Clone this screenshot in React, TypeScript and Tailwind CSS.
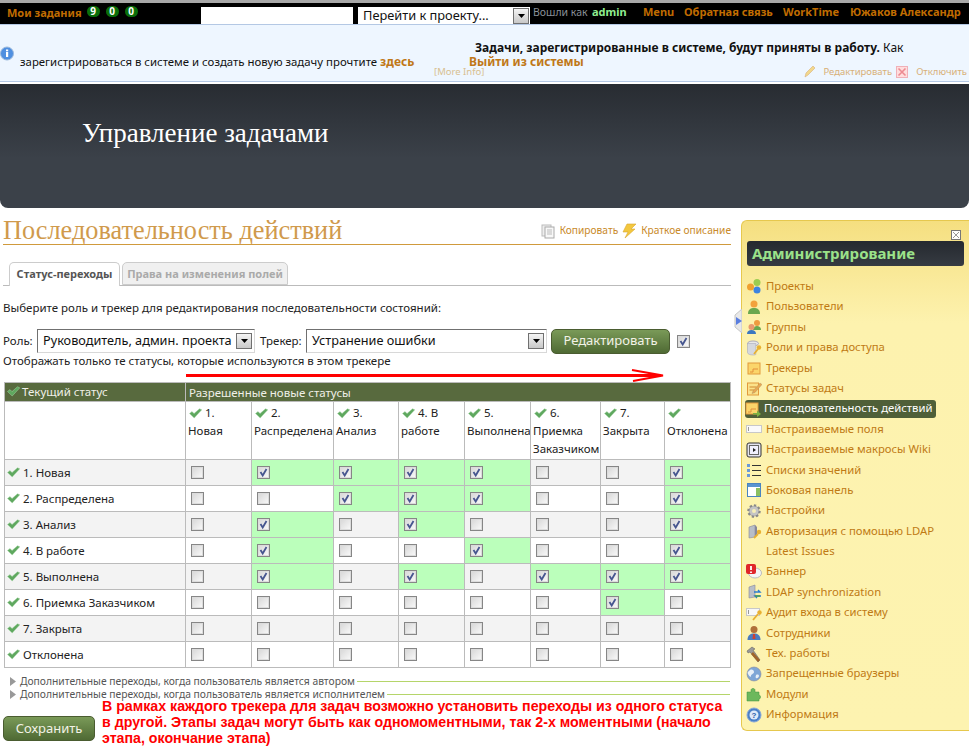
import React from "react";

const F = "font-['Noto_Sans','DejaVu_Sans',sans-serif]";

function Check() {
  return (
    <svg width="13" height="11" viewBox="0 0 13 11" className="inline-block shrink-0">
      <path d="M0.500 5.500 L3 3.600 L5 5.600 L10.500 0.800 L12.800 1.800 L5.200 10 Z" fill="#5fa85f" stroke="#a4d4a4" strokeWidth="0.5" />
    </svg>
  );
}

function Box({ on }: { on?: boolean }) {
  return (
    <span className="relative block w-[13px] h-[13px] border border-[#868686] bg-gradient-to-br from-[#d6d6d6] to-[#fbfbfb] outline outline-1 outline-[#dcdcdc] -outline-offset-2">
      {on && (
        <svg viewBox="0 0 11 11" className="absolute left-0 top-0 w-[11px] h-[11px]">
          <path d="M2.5 5 L4.7 8.5 L8.5 2" fill="none" stroke="#46568f" strokeWidth="1.8" />
        </svg>
      )}
    </span>
  );
}

function Caret() {
  return (
    <span className="flex items-center justify-center w-[16px] h-[16px] border border-[#707070] bg-gradient-to-b from-[#f4f4f4] to-[#c8c8c8]">
      <svg width="7" height="4" viewBox="0 0 7 4"><path d="M0 0H7L3.5 4Z" fill="#000" /></svg>
    </span>
  );
}

function Sel({ w, text }: { w: string; text: string }) {
  return (
    <div className={`${w} shrink-0 flex items-center justify-between border border-t-[#707070] border-l-[#707070] border-r-[#d8d8d8] border-b-[#d8d8d8] bg-white pl-[5px] pr-[2px] h-[24px] text-[12.700px] text-[#111] overflow-hidden whitespace-nowrap`}>
      <span>{text}</span>
      <Caret />
    </div>
  );
}

const Ico: Record<string, React.ReactNode> = {
  projects: (<><circle cx="4.5" cy="9" r="3.5" fill="#f0a030" /><circle cx="11" cy="4.5" r="3.5" fill="#9ccc50" /><circle cx="11" cy="12" r="3.5" fill="#3d84e0" /></>),
  users: (<><circle cx="8" cy="5" r="3.5" fill="#f2a23c" /><path d="M2 15c0-5 3-6 6-6s6 1 6 6z" fill="#6aa84f" /></>),
  groups: (<><circle cx="11" cy="4" r="3" fill="#ee9c40" /><path d="M7 11c0-3 2-4 4-4s4 1 4 4z" fill="#6aa84f" /><circle cx="5.5" cy="8" r="3" fill="#e89a70" /><path d="M1 15c0-3 2-4 4.500-4s4.500 1 4.500 4z" fill="#3d78c0" /></>),
  roles: (<><ellipse cx="7" cy="3.500" rx="5.500" ry="2.500" fill="#e8e8e8" stroke="#aab" /><path d="M1.500 3.500v9c0 1.500 2.500 2.500 5.500 2.500 1 0 2-.1 2.800-.4V3.500z" fill="#d5d8de" stroke="#aab" strokeWidth=".6" /><circle cx="13" cy="7.500" r="2.200" fill="#e8b030" /><path d="M12 9l-4 5" stroke="#e8b030" strokeWidth="1.800" /></>),
  trackers: (<><rect x="2" y="3" width="12" height="11" fill="#fbd56a" stroke="#e29a3c" /><path d="M4 12h3v-3h5" fill="none" stroke="#e2903c" /></>),
  statuses: (<><rect x="1.500" y="3" width="11" height="12" fill="#fbe28a" stroke="#e29a3c" /><path d="M3.500 7h7M3.500 10h5" stroke="#d08a30" /><path d="M7 11l7-8 2 1.500-7 8-3 1z" fill="#e8a850" stroke="#a86" strokeWidth=".4" /></>),
  flow: (<><rect x="1" y="2" width="12" height="11" fill="#fbd56a" stroke="#e29a3c" /><path d="M3 11h3V8h5" fill="none" stroke="#e2903c" /><path d="M8 12h4V9.500l4 3.500-4 3v-2.500H8z" fill="#7cb342" /></>),
  fields: (<><rect x="0.500" y="4.500" width="15" height="7" fill="#fafafa" stroke="#c8c8c8" /><path d="M2.500 6v4" stroke="#999" /></>),
  macros: (<><rect x="1" y="1" width="14" height="14" rx="2" fill="#e4e4f0" stroke="#333" /><rect x="3.500" y="3.500" width="9" height="9" fill="#f0f0ff" stroke="#666" /><path d="M7 6v4l3-2z" fill="#222" /></>),
  lists: (<><rect x="1" y="2" width="3" height="3" fill="#6a9ad8" /><rect x="1" y="7" width="3" height="3" fill="#6a9ad8" /><rect x="1" y="12" width="3" height="3" fill="#6a9ad8" /><path d="M6 3.500h9M6 8.500h9M6 13.500h9" stroke="#333" /></>),
  sidebar: (<><rect x="1.500" y="1.500" width="13" height="13" fill="#fff" stroke="#4a84c0" /><rect x="2" y="2" width="12" height="3" fill="#5a94d0" /><rect x="10" y="6" width="4" height="8" fill="#8cc060" /></>),
  settings: (<><circle cx="8" cy="8" r="5.500" fill="#b0b0b0" stroke="#888" strokeWidth="2.500" strokeDasharray="2.200 2" /><circle cx="8" cy="8" r="4.500" fill="#c4c4c4" /><circle cx="8" cy="8" r="2" fill="#f6efb8" /></>),
  ldap: (<><path d="M3 4l6-2v12l-6 1z" fill="#b8bec8" stroke="#889" strokeWidth=".6" /><path d="M9 2l2 2v8l-2 2z" fill="#889" /><circle cx="13" cy="9" r="2.200" fill="#e8b030" /><path d="M12 11l-4 4" stroke="#e8b030" strokeWidth="1.800" /></>),
  none: null,
  banner: (<><ellipse cx="9" cy="9" rx="6.500" ry="5" fill="#f4f4f4" stroke="#bbb" /><rect x="0" y="0" width="10" height="10" rx="2" fill="#e0262a" /><path d="M5 2v4M5 7.500v1.500" stroke="#fff" strokeWidth="1.800" /></>),
  sync: (<><path d="M3 3l6-2v12l-6 1z" fill="#b8bec8" stroke="#889" strokeWidth=".6" /><path d="M8 8h6l-2-2M15 12H9l2 2" fill="none" stroke="#2a7cd0" strokeWidth="1.400" /><path d="M9 12h5" stroke="#50a040" strokeWidth="1.400" /></>),
  audit: (<><rect x="0.500" y="3.500" width="13" height="7" fill="#f8f8f8" stroke="#c8c8c8" /><path d="M2.500 5v4" stroke="#999" /><circle cx="13.500" cy="7.500" r="2.200" fill="#e8b030" /><path d="M12 9l-5 6" stroke="#e8b030" strokeWidth="1.800" /></>),
  staff: (<><circle cx="8" cy="4.500" r="3.500" fill="#b0703a" /><path d="M1.500 15c0-5 3-6.500 6.500-6.500s6.500 1.500 6.500 6.500z" fill="#4a7cc0" /><path d="M7 9h2l.5 5h-3z" fill="#d04030" /></>),
  tools: (<><path d="M1 5l5-4 3 2-2 1 7 10-2 2-8-10-2 1z" fill="#9a9a9a" stroke="#555" strokeWidth=".5" /><path d="M7 6l7 8-2 2-7-8z" fill="#a0662a" /></>),
  globe: (<><circle cx="8" cy="8" r="7" fill="#7ea6d6" stroke="#889" strokeWidth=".6" /><path d="M4 4c2-1 4 0 4 2s-3 2-3 4-2 0-3-2 1-3 2-4zM10 9c2-1 3 0 3 1s-2 3-3 2 0-2 0-3z" fill="#e8f0f8" /></>),
  modules: (<path d="M1 6h4V4c0-2 4-2 4 0v2h4v3c2 0 2 4 0 4v2H1z" fill="#6cb85c" stroke="#3f9040" strokeWidth=".5" />),
  info: (<><circle cx="8" cy="8" r="7" fill="#4a80c8" stroke="#88a8d8" /><circle cx="8" cy="8" r="4.500" fill="#dfe9f8" /><text x="8" y="11" textAnchor="middle" fontSize="8" fontWeight="700" fill="#2a5aa8" fontFamily="Liberation Sans">?</text></>),
};

const menu: [string, string][] = [
  ["projects", "Проекты"], ["users", "Пользователи"], ["groups", "Группы"], ["roles", "Роли и права доступа"],
  ["trackers", "Трекеры"], ["statuses", "Статусы задач"], ["flow", "Последовательность действий"], ["fields", "Настраиваемые поля"],
  ["macros", "Настраиваемые макросы Wiki"], ["lists", "Списки значений"], ["sidebar", "Боковая панель"], ["settings", "Настройки"],
  ["ldap", "Авторизация с помощью LDAP"], ["none", "Latest Issues"], ["banner", "Баннер"], ["sync", "LDAP synchronization"],
  ["audit", "Аудит входа в систему"], ["staff", "Сотрудники"], ["tools", "Тех. работы"], ["globe", "Запрещенные браузеры"],
  ["modules", "Модули"], ["info", "Информация"],
];

const cols: [string, string, number][] = [
  ["1.", "Новая", 66], ["2.", "Распределена", 82], ["3.", "Анализ", 65], ["4. В", "работе", 66],
  ["5.", "Выполнена", 66], ["6.", "Приемка Заказчиком", 70], ["7.", "Закрыта", 64], ["", "Отклонена", 66],
];

const rows: [string, number[]][] = [
  ["1. Новая", [2, 3, 4, 5, 8]],
  ["2. Распределена", [3, 4, 5, 8]],
  ["3. Анализ", [2, 4, 8]],
  ["4. В работе", [2, 5, 8]],
  ["5. Выполнена", [2, 4, 6, 7, 8]],
  ["6. Приемка Заказчиком", [7]],
  ["7. Закрыта", []],
  ["Отклонена", []],
];

function Extra({ text }: { text: string }) {
  return (
    <div className="flex items-center h-[13px] pl-[7px] text-[10.300px] text-[#555]">
      <svg width="6" height="9" viewBox="0 0 6 9" className="mr-[4px] shrink-0"><path d="M0 0L6 4.500L0 9Z" fill="#999" /></svg>
      <span className="whitespace-nowrap">{text}</span>
      <span className="flex-1 h-px bg-[#b5d56a] ml-[2px]" />
    </div>
  );
}

export default function App() {
  return (
    <div className={`${F} relative w-[969px] h-[746px] overflow-hidden bg-white text-[11.500px] text-[#222]`}>
      {/* Top bar */}
      <div className="h-[24px] border-t-[3px] border-[#a8a8a8] bg-black flex overflow-hidden">
        <div className="w-[201px] shrink-0 pl-[7px] pt-[1px] leading-[17px] font-bold text-[#c06c00] text-[11px]">
          <div className="flex items-center">
            <span>Мои задания</span>
            <span className="flex gap-[6px] ml-[5px] -mt-[3px]">
              {["9", "0", "0"].map((n, i) => (
                <span key={i} className="w-[13px] h-[11px] rounded-full bg-[#0a6e0a] text-white text-[10px] leading-[11px] text-center">{n}</span>
              ))}
            </span>
          </div>
          <div className="pl-[4px] whitespace-nowrap -mt-[2px]">Новая задача&nbsp;&nbsp;&nbsp;Сотрудники</div>
        </div>
        <div className="w-[152px] h-[20px] mt-[4px] bg-white shrink-0" />
        <div className="w-[172px] h-[22px] mt-[4px] ml-[5px] bg-white shrink-0 flex justify-between pl-[5px] pr-[1px] text-[12.800px] text-[#111] leading-[17px]">
          <span>Перейти к проекту...</span>
          <span className="mt-[1px]"><Caret /></span>
        </div>
        <div className="ml-[3px] flex items-center h-[19px] whitespace-nowrap text-[11px] font-bold text-[#c06c00]">
          <span className="w-[59px] font-normal text-[10.500px] text-[#8a9098]">Вошли как</span>
          <span className="w-[51px] text-[#90ee90]">admin</span>
          <span className="w-[41px]">Menu</span>
          <span className="w-[99px]">Обратная связь</span>
          <span className="w-[67px]">WorkTime</span>
          <span>Южаков Александр</span>
        </div>
      </div>

      {/* Notice */}
      <div className="h-[58px] border-y border-[#b4c8e4] bg-[#eef6ff] relative text-[12px] text-[#111]">
        <div className="absolute left-0 top-[21px]">
          <svg width="15" height="15" viewBox="0 0 15 15"><circle cx="7" cy="7.500" r="6.500" fill="#4f8fe0" stroke="#9ab8dc" /><rect x="6" y="6" width="2.200" height="5" fill="#fff" /><rect x="6" y="3.500" width="2.200" height="1.800" fill="#fff" /></svg>
        </div>
        <div className="h-[16px]" />
        <div className="pl-[475px] leading-[14px] whitespace-nowrap"><b>Задачи, зарегистрированные в системе, будут приняты в работу.</b> Как</div>
        <div className="flex leading-[15px] whitespace-nowrap -mt-[1px]">
          <span className="w-[469px] pl-[20px] text-[11.400px]">зарегистрироваться в системе и создать новую задачу прочтите <b className="text-[12px] text-[#c07818]">здесь</b></span>
          <b className="text-[#c07818]">Выйти из системы</b>
        </div>
        <div className="flex items-center text-[9.500px] text-[#d8c090] leading-[12px] whitespace-nowrap -mt-[4px]">
          <span className="ml-[434px]">[More Info]</span>
          <span className="ml-auto flex items-center pr-[2px] text-[#d8b078]">
            <svg width="12" height="13" viewBox="0 0 12 13" className="mr-[7px]"><path d="M1 12l1-4 7-7 2 2-7 7z" fill="#f2d88c" stroke="#d8b078" strokeWidth=".6" /></svg>
            <span>Редактировать</span>
            <svg width="12" height="12" viewBox="0 0 12 12" className="mr-[8px] ml-[4px]"><rect x=".5" y=".5" width="11" height="11" fill="#fdd" stroke="#f0b0b8" /><path d="M2.500 2.500l7 7M9.500 2.500l-7 7" stroke="#ec8a92" strokeWidth="1.600" /></svg>
            <span>Отключить</span>
          </span>
        </div>
      </div>

      {/* Banner */}
      <div className="mt-[2px] h-[124px] rounded-b-[8px] bg-gradient-to-b from-[#282c32] to-[#3b4149] to-60% pl-[82px] pt-[33px]">
        <h1 className="font-['Liberation_Serif',serif] text-[27px] leading-[32px] text-white whitespace-nowrap">Управление задачами</h1>
      </div>

      <div className="flex">
        {/* Main */}
        <div className="w-[728px] ml-[3px] shrink-0">
          <div className="h-[37px] border-b border-[#d09a3c] flex items-start justify-between">
            <h2 className="font-['Liberation_Serif',serif] text-[26.300px] leading-[28px] mt-[9px] text-[#d09a4c] whitespace-nowrap">Последовательность действий</h2>
            <div className="flex items-center mt-[15px] text-[10.200px] text-[#c98a2a] whitespace-nowrap">
              <svg width="14" height="15" viewBox="0 0 14 15" className="mr-[5px]"><rect x="1" y="1" width="9" height="11" fill="#eee" stroke="#bbb" /><rect x="4" y="3" width="9" height="11" fill="#f8f8f8" stroke="#aaa" /><path d="M6 6h5M6 8h5M6 10h5" stroke="#bbb" /></svg>
              <span>Копировать</span>
              <svg width="16" height="16" viewBox="0 0 16 16" className="mx-[3px]"><path d="M6 1h9l-5 5h4L4 15l3-6H2z" fill="#f3c73e" stroke="#d8a830" strokeWidth=".6" /></svg>
              <span className="ml-[1px]">Краткое описание</span>
            </div>
          </div>

          <div className="mt-[17px] h-[24px] border-b border-[#bbb] flex pl-[6px] text-[11px] font-bold">
            <div className="w-[111px] h-[24px] border border-b-0 border-[#ccc] rounded-t-[5px] bg-white text-[#555] text-center leading-[22px] whitespace-nowrap">Статус-переходы</div>
            <div className="w-[166px] h-[23px] ml-[2px] border border-[#ccc] rounded-t-[5px] bg-[#f0f0f0] text-[#aaa] text-center leading-[22px] whitespace-nowrap">Права на изменения полей</div>
          </div>

          <p className="mt-[14px] leading-[16px] whitespace-nowrap">Выберите роль и трекер для редактирования последовательности состояний:</p>

          <div className="mt-[12px] flex items-center h-[26px] whitespace-nowrap">
            <span className="w-[34px] shrink-0">Роль:</span>
            <Sel w="w-[218px]" text="Руководитель, админ. проекта" />
            <span className="w-[51px] pl-[5px] shrink-0">Трекер:</span>
            <Sel w="w-[241px]" text="Устранение ошибки" />
            <button className="ml-[4px] w-[119px] h-[25px] shrink-0 rounded-[5px] border border-[#4a5c30] bg-gradient-to-b from-[#7a9a58] to-[#4f6a34] text-[#f2f2e6] text-[13px]">Редактировать</button>
            <span className="ml-[7px]"><Box on /></span>
          </div>

          <p className="-mt-[1px] leading-[16px] whitespace-nowrap">Отображать только те статусы, которые используются в этом трекере</p>

          <table className="mt-[13px] ml-[1px] w-[726px] table-fixed border-collapse border border-[#bbb]">
            <colgroup>
              <col className="w-[181px]" />
              {cols.map((c, i) => <col key={i} style={{ width: c[2] }} />)}
            </colgroup>
            <thead>
              <tr className="h-[19px] bg-[#586a3e] text-[#f0f0e8] text-left">
                <th className="font-normal pl-[2px] border-r border-[#bbb] whitespace-nowrap"><span className="inline-flex items-center gap-[2px]"><Check />Текущий статус</span></th>
                <th colSpan={8} className="font-normal pl-[3px]">Разрешенные новые статусы</th>
              </tr>
              <tr className="h-[58px]">
                <td className="border border-[#bbb]" />
                {cols.map((c, i) => (
                  <td key={i} className="border border-[#bbb] px-[2px] align-top text-left leading-[18px] pt-[2px] font-normal overflow-hidden">
                    <div className="flex items-center gap-[3px] h-[18px] pl-[1px]"><Check />{c[0]}</div>
                    <div className="whitespace-normal">{c[1]}</div>
                  </td>
                ))}
              </tr>
            </thead>
            <tbody>
              {rows.map(([name, on], r) => (
                <tr key={name} className={`h-[26px] ${r % 2 === 0 ? "bg-[#f3f3f3]" : "bg-white"}`}>
                  <td className="border border-[#bbb] pl-[2px] whitespace-nowrap"><span className="flex items-center gap-[3px]"><Check />{name}</span></td>
                  {cols.map((_, c) => (
                    <td key={c} className={`border border-[#bbb] pl-[5px] ${on.includes(c + 1) ? "bg-[#bbffbb]" : ""}`}><Box on={on.includes(c + 1)} /></td>
                  ))}
                </tr>
              ))}
            </tbody>
          </table>

          <div className="mt-[7px] w-[727px]">
            <Extra text="Дополнительные переходы, когда пользователь является автором" />
            <Extra text="Дополнительные переходы, когда пользователь является исполнителем" />
          </div>

          <div className="flex items-start -mt-[3px]">
            <button className="mt-[18px] w-[92px] h-[25px] shrink-0 rounded-[5px] border border-[#4a5c30] bg-gradient-to-b from-[#7a9a58] to-[#4f6a34] text-[#f2f2e6] text-[13px]">Сохранить</button>
            <p className="ml-[7px] font-['Liberation_Sans',sans-serif] font-bold text-[14.200px] leading-[16px] text-[#ff0000] w-[632px]">В рамках каждого трекера для задач возможно установить переходы из одного статуса в другой. Этапы задач могут быть как одномоментными, так 2-х моментными (начало этапа, окончание этапа)</p>
          </div>
        </div>

        {/* Sidebar */}
        <aside className="relative ml-[10px] mt-[12px] w-[228px] h-[511px] shrink-0 rounded-l-[6px] border border-r-0 border-[#e6c84e] bg-gradient-to-b from-[#f5df80] via-[#fdf2ae] via-20% to-[#fdf3b0] pl-[3px]">
          <div className="flex justify-end pr-[8px] pt-[9px] h-[20px]">
            <svg width="10" height="10" viewBox="0 0 10 10"><rect x=".5" y=".5" width="9" height="9" fill="#fff" stroke="#777" /><path d="M2 2l6 6M8 2l-6 6" stroke="#999" /></svg>
          </div>
          <div className="h-[25px] ml-[2px] mr-[5px] rounded-[3px] bg-gradient-to-b from-[#25292f] to-[#363b42] pl-[5px] font-bold text-[15px] leading-[25px] text-[#9be28a]">Администрирование</div>
          <ul className="mt-[10.300px] text-[11.300px] text-[#c07a14]">
            {menu.map(([ic, label]) => {
              const active = ic === "flow";
              return (
                <li key={label} className="h-[20.4px] flex items-center">
                  <span className={active ? "flex items-center h-[18px] w-[191px] rounded-[3px] bg-[#4f5f38] text-white whitespace-nowrap" : "flex items-center whitespace-nowrap pl-[1px]"}>
                    <svg width="16" height="16" viewBox="0 0 16 16" className={active ? "mr-[3px] shrink-0" : "mr-[4px] shrink-0"}>{Ico[ic]}</svg>
                    {label}
                  </span>
                </li>
              );
            })}
          </ul>
          <div className="absolute -left-[8px] top-[88px]">
            <svg width="8" height="24" viewBox="0 0 8 24"><path d="M8 0L1 6v12l7 6z" fill="#e8e8e8" stroke="#c4c4c4" /><path d="M2 8v8l6-4z" fill="#5a7ee0" /></svg>
          </div>
        </aside>
      </div>

      {/* Red arrow annotation */}
      <svg width="480" height="14" viewBox="0 0 480 14" className="absolute left-[186px] top-[369px]">
        <path d="M0 6.500H475" stroke="#ff0000" strokeWidth="3" />
        <path d="M446 1L477 6.500L447 12" fill="none" stroke="#ff0000" strokeWidth="2" />
      </svg>
    </div>
  );
}
